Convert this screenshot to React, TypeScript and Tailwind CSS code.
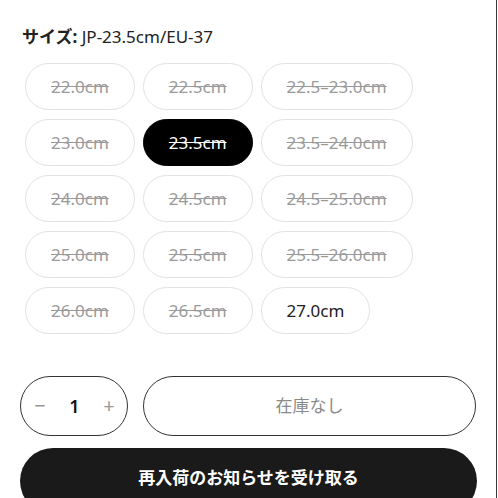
import { useState } from "react";

const sizes = [
  { label: "22.0cm", out: true },
  { label: "22.5cm", out: true },
  { label: "22.5–23.0cm", out: true },
  { label: "23.0cm", out: true },
  { label: "23.5cm", out: true, selected: true },
  { label: "23.5–24.0cm", out: true },
  { label: "24.0cm", out: true },
  { label: "24.5cm", out: true },
  { label: "24.5–25.0cm", out: true },
  { label: "25.0cm", out: true },
  { label: "25.5cm", out: true },
  { label: "25.5–26.0cm", out: true },
  { label: "26.0cm", out: true },
  { label: "26.5cm", out: true },
  { label: "27.0cm", out: false },
];

export default function App() {
  const [qty, setQty] = useState(1);

  return (
    <div
      className="w-[498px] h-[498px] overflow-hidden bg-white"
      style={{ fontFamily: '"Noto Sans", "Noto Sans CJK JP", sans-serif' }}
    >
      <div className="w-[497px] h-full border-r border-[#3a3a3a] pl-5 pr-[19px] pt-[25px]">
        <div className="text-[17px] leading-6 text-[#222] pl-[2px]">
          <span className="font-bold">サイズ:</span> JP-23.5cm/EU-37
        </div>

        <div className="mt-[14px] pl-[5px] flex flex-wrap gap-x-2 gap-y-[9px] w-[400px]">
          {sizes.map((s) => (
            <button
              key={s.label}
              className={`h-[47px] px-[25px] rounded-full border text-[17px] ${
                s.selected
                  ? "bg-black border-black text-white"
                  : s.out
                  ? "bg-white border-[#e2e2e2] text-[#9a9a9a]"
                  : "bg-white border-[#e2e2e2] text-[#222]"
              } ${s.out ? "line-through" : ""}`}
            >
              {s.label}
            </button>
          ))}
        </div>

        <div className="mt-[42px] flex gap-[15px] pr-[1px]">
          <div className="w-[108px] h-[60px] rounded-full border-[1.5px] border-[#333] flex items-center justify-between pl-[9px] pr-[8px]">
            <button
              className="text-[#999] text-[20px] leading-none w-5"
              onClick={() => setQty(Math.max(1, qty - 1))}
            >
              −
            </button>
            <span className="text-[18px] font-semibold text-[#111]">{qty}</span>
            <button
              className="text-[#999] text-[20px] leading-none w-5"
              onClick={() => setQty(qty + 1)}
            >
              +
            </button>
          </div>
          <button className="flex-1 h-[60px] rounded-full border-[1.5px] border-[#333] text-[#8a8a8a] text-[17px]">
            在庫なし
          </button>
        </div>

        <button className="mt-[12px] w-full h-[66px] rounded-full bg-[#1a1a1a] text-white font-bold text-[17px] pb-[6px]">
          再入荷のお知らせを受け取る
        </button>
      </div>
    </div>
  );
}
